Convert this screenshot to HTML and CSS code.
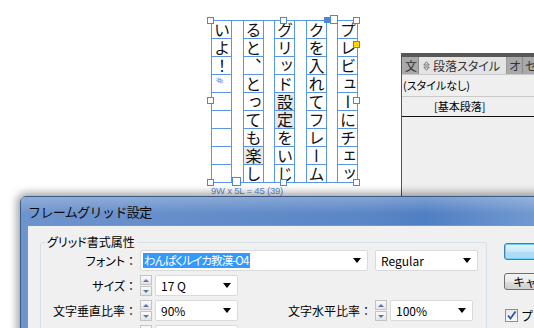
FILE: index.html
```html
<!DOCTYPE html>
<html lang="ja">
<head>
<meta charset="utf-8">
<title>フレームグリッド設定</title>
<link rel="stylesheet" href="styles.css">
</head>
<body>
<div class="frame-wrap">
  <div class="frame">
    <div class="col">
      <div class="cell"><span class="ch">い</span></div>
      <div class="cell"><span class="ch">よ</span></div>
      <div class="cell"><span class="ch">！</span></div>
      <div class="cell cell-mark"><span class="endmark">#</span></div>
      <div class="cell"></div>
      <div class="cell"></div>
      <div class="cell"></div>
      <div class="cell"></div>
      <div class="cell"></div>
    </div>
    <div class="col">
      <div class="cell"><span class="ch">る</span></div>
      <div class="cell"><span class="ch">と</span></div>
      <div class="cell"><span class="ch">、</span></div>
      <div class="cell"><span class="ch">と</span></div>
      <div class="cell"><span class="ch">っ</span></div>
      <div class="cell"><span class="ch">て</span></div>
      <div class="cell"><span class="ch">も</span></div>
      <div class="cell cell-sub"><span class="ch">楽</span></div>
      <div class="cell"><span class="ch">し</span></div>
    </div>
    <div class="col">
      <div class="cell"><span class="ch">グ</span></div>
      <div class="cell"><span class="ch">リ</span></div>
      <div class="cell"><span class="ch">ッ</span></div>
      <div class="cell"><span class="ch">ド</span></div>
      <div class="cell cell-sub"><span class="ch">設</span></div>
      <div class="cell cell-sub"><span class="ch">定</span></div>
      <div class="cell"><span class="ch">を</span></div>
      <div class="cell"><span class="ch">い</span></div>
      <div class="cell"><span class="ch">じ</span></div>
    </div>
    <div class="col">
      <div class="cell"><span class="ch">ク</span></div>
      <div class="cell"><span class="ch">を</span></div>
      <div class="cell"><span class="ch">入</span></div>
      <div class="cell"><span class="ch">れ</span></div>
      <div class="cell"><span class="ch">て</span></div>
      <div class="cell"><span class="ch">フ</span></div>
      <div class="cell"><span class="ch">レ</span></div>
      <div class="cell"><span class="ch">ー</span></div>
      <div class="cell"><span class="ch">ム</span></div>
    </div>
    <div class="col">
      <div class="cell"><span class="ch">プ</span></div>
      <div class="cell"><span class="ch">レ</span></div>
      <div class="cell"><span class="ch">ビ</span></div>
      <div class="cell"><span class="ch">ュ</span></div>
      <div class="cell"><span class="ch">ー</span></div>
      <div class="cell"><span class="ch">に</span></div>
      <div class="cell"><span class="ch">チ</span></div>
      <div class="cell"><span class="ch">ェ</span></div>
      <div class="cell"><span class="ch">ッ</span></div>
    </div>
    <span class="h h-tl"></span>
    <span class="h h-tm"></span>
    <span class="h h-tr"></span>
    <span class="h h-ml"></span>
    <span class="h h-mr"></span>
    <span class="h h-bl"></span>
    <span class="h h-bm"></span>
    <span class="h h-br"></span>
    <span class="inport"><span class="inport-fill"></span><span class="inport-box"></span></span>
    <span class="outport"></span>
    <span class="corner-opt"></span>
  </div>
  <div class="grid-count">9W x 5L = 45 (39)</div>
</div>

<div class="panel">
  <div class="panel-top"></div>
  <div class="tabs">
    <div class="tab tab-clip">文</div>
    <div class="tab tab-active">
      <svg class="tab-icon" width="7" height="10" viewBox="0 0 7 10"><path d="M3.5 0.8 L6.2 4 H0.8 Z M3.5 9.2 L6.2 6 H0.8 Z" fill="none" stroke="#666" stroke-width="0.9"/></svg>
      <span>段落スタイル</span>
    </div>
    <div class="tab">オ</div>
    <div class="tab">セ</div>
    <div class="tab tab-rest"></div>
  </div>
  <div class="panel-body">
    <div class="style-row style-none">(スタイルなし)</div>
    <div class="style-row style-basic">[基本段落]</div>
  </div>
</div>

<div class="dialog">
  <div class="titlebar">フレームグリッド設定</div>
  <div class="dlg-body">
    <fieldset class="group">
      <legend>グリッド書式属性</legend>
      <div class="frow">
        <span class="lbl">フォント<span class="colon">：</span></span>
        <div class="combo combo-font"><span class="selected">わんぱくルイカ教漢-O4</span><i class="arrow"></i></div>
        <div class="combo combo-style"><span>Regular</span><i class="arrow"></i></div>
      </div>
      <div class="frow">
        <span class="lbl">サイズ<span class="colon">：</span></span>
        <div class="spin"><span class="spin-up"></span><span class="spin-down"></span></div>
        <div class="combo combo-num"><span>17 Q</span><i class="arrow"></i></div>
      </div>
      <div class="frow">
        <span class="lbl">文字垂直比率<span class="colon">：</span></span>
        <div class="spin"><span class="spin-up"></span><span class="spin-down"></span></div>
        <div class="combo combo-num"><span>90%</span><i class="arrow"></i></div>
        <span class="lbl lbl-2">文字水平比率<span class="colon">：</span></span>
        <div class="spin"><span class="spin-up"></span><span class="spin-down"></span></div>
        <div class="combo combo-num"><span>100%</span><i class="arrow"></i></div>
      </div>
      <div class="frow">
        <span class="lbl"></span>
        <div class="spin"><span class="spin-up"></span><span class="spin-down"></span></div>
        <div class="combo combo-num"><i class="arrow"></i></div>
      </div>
    </fieldset>
    <div class="buttons">
      <div class="btn btn-ok">OK</div>
      <div class="btn btn-cancel">キャンセル</div>
      <div class="chk">
        <span class="chk-box"><svg width="11" height="11" viewBox="0 0 11 11"><path d="M2 5.5 L4.5 8.5 L9.5 1.5" fill="none" stroke="#2b55a6" stroke-width="1.8"/></svg></span>
        <span>プレビュー</span>
      </div>
    </div>
  </div>
</div>
</body>
</html>
```

FILE: styles.css
```css
html, body {
  margin: 0;
  padding: 0;
}
body {
  width: 534px;
  height: 328px;
  overflow: hidden;
  background: #fff;
  position: relative;
  font-family: "Noto Sans CJK JP", sans-serif;
  color: #000;
}

/* ---------- text frame on the canvas ---------- */
.frame-wrap {
  position: absolute;
  left: 211px;
  top: 20px;
  display: flex;
  flex-direction: column;
}
.frame {
  position: relative;
  width: 147px;
  height: 163px;
  box-sizing: border-box;
  border-top: 1px solid #5a95e6;
  border-bottom: 1px solid #5a95e6;
  display: flex;
  justify-content: space-between;
}
.col {
  width: 21px;
  box-sizing: border-box;
  border-left: 1px solid #5a95e6;
  border-right: 1px solid #5a95e6;
  display: flex;
  flex-direction: column;
}
.cell {
  height: 18px;
  box-sizing: border-box;
  border-bottom: 1px solid #5a95e6;
  display: flex;
  align-items: center;
  justify-content: center;
  flex: none;
}
.cell:last-child {
  border-bottom: none;
  height: 17px;
}
.cell-sub {
  background: #e8e8e8;
}
.ch {
  writing-mode: vertical-rl;
  font-size: 16px;
  line-height: 19px;
  width: 19px;
  height: 16px;
  text-align: center;
  color: #111;
}
.cell-mark {
  align-items: flex-start;
  justify-content: flex-start;
}
.endmark {
  display: block;
  font-family: "DejaVu Sans", sans-serif;
  font-size: 9px;
  line-height: 9px;
  color: #6a9fe8;
  transform: rotate(90deg);
  margin: 1px 0 0 3px;
}
.h {
  position: absolute;
  width: 5px;
  height: 5px;
  border: 1px solid #4a88de;
  background: #fff;
}
.h-tl { left: -4px; top: -4px; }
.h-tm { left: 69px; top: -4px; }
.h-tr { left: 142px; top: -4px; }
.h-ml { left: -4px; top: 76px; }
.h-mr { left: 142px; top: 76px; }
.h-bl { left: -4px; top: 158px; }
.h-bm { left: 69px; top: 158px; }
.h-br { left: 142px; top: 158px; }
.inport {
  position: absolute;
  left: 113px;
  top: -6px;
  display: flex;
  align-items: center;
}
.inport-fill {
  width: 6px;
  height: 6px;
  background: #4a88de;
}
.inport-box {
  width: 6px;
  height: 7px;
  border: 1px solid #4a88de;
  background: #fff;
}
.outport {
  position: absolute;
  left: 21px;
  top: 156px;
  width: 7px;
  height: 7px;
  border: 1px solid #4a88de;
  background: #fff;
}
.corner-opt {
  position: absolute;
  left: 142px;
  top: 20px;
  width: 5px;
  height: 5px;
  border: 1px solid #4a88de;
  background: #ffd500;
}
.grid-count {
  margin-top: 3px;
  font-family: "Liberation Sans", sans-serif;
  font-size: 9.5px;
  line-height: 10px;
  letter-spacing: -0.2px;
  color: #5b8ed6;
  white-space: nowrap;
}

/* ---------- paragraph styles panel ---------- */
.panel {
  position: absolute;
  left: 401px;
  top: 53px;
  width: 133px;
  height: 150px;
  background: #efefef;
  border-left: 1px solid #555;
  display: flex;
  flex-direction: column;
  overflow: hidden;
}
.panel-top {
  height: 4px;
  background: #575757;
}
.tabs {
  height: 17px;
  display: flex;
  background: #a9a9a9;
  border-bottom: 1px solid #c8c8c8;
}
.tab {
  font-size: 12px;
  line-height: 17px;
  color: #333;
  padding: 0 2px;
  border-right: 1px solid #8a8a8a;
  width: 11px;
  overflow: hidden;
  white-space: nowrap;
  flex: none;
}
.tab-clip {
  width: 11px;
  padding-left: 3px;
}
.tab-active {
  width: auto;
  background: #e4e4e4;
  padding: 0 6px 0 4px;
  display: flex;
  align-items: center;
  gap: 3px;
  font-feature-settings: "palt";
  border-right: 1px solid #9a9a9a;
}
.tab-rest {
  flex: 1;
  border-right: none;
}
.panel-body {
  display: flex;
  flex-direction: column;
}
.style-row {
  font-size: 11px;
  font-feature-settings: "palt";
  white-space: nowrap;
}
.style-none {
  height: 21px;
  line-height: 21px;
  padding-left: 1px;
  border-bottom: 1px solid #c9c9c9;
}
.style-basic {
  height: 19px;
  line-height: 18px;
  padding-left: 32px;
  border-bottom: 1px solid #111;
}

/* ---------- dialog ---------- */
.dialog {
  position: absolute;
  left: 20px;
  top: 196px;
  width: 580px;
  height: 160px;
  box-sizing: border-box;
  border: 1px solid #3b5b86;
  border-radius: 6px 6px 0 0;
  background: linear-gradient(to right, #6e94cd 0%, #5a86c6 60%, #4f7fc3 70%, #86a9d9 100%);
  box-shadow: 0 0 9px 3px rgba(0, 0, 0, 0.38);
  display: flex;
  flex-direction: column;
}
.titlebar {
  height: 28px;
  flex: none;
  padding-left: 7px;
  display: flex;
  align-items: center;
  font-size: 13px;
  letter-spacing: -0.6px;
  color: #0a0a0a;
  background: linear-gradient(to bottom, rgba(255,255,255,0.25), rgba(255,255,255,0) 60%);
}
.dlg-body {
  flex: 1;
  margin-left: 6px;
  background: #f0f0f0;
  border-left: 1px solid #8193ad;
  border-top: 1px solid #8193ad;
  display: flex;
  padding: 8px 0 0 12px;
  align-items: flex-start;
}
.group {
  margin: 0;
  width: 447px;
  box-sizing: border-box;
  border: 1px solid #d5dfe5;
  border-radius: 3px;
  padding: 0;
  display: flex;
  flex-direction: column;
  gap: 4px;
}
.group legend {
  font-size: 12px;
  line-height: 16px;
  padding: 0 2px;
  margin-left: 4px;
  font-feature-settings: "palt";
}
.frow {
  display: flex;
  align-items: center;
  height: 21px;
}
.lbl {
  width: 96px;
  flex: none;
  text-align: right;
  font-size: 12px;
  font-feature-settings: "palt";
  margin-right: 3px;
  white-space: nowrap;
}
.colon {
  font-feature-settings: normal;
}
.lbl-2 {
  width: 134px;
  margin-right: 3px;
}
.combo {
  height: 21px;
  box-sizing: border-box;
  background: #fff;
  border: 1px solid #dadada;
  border-radius: 2px;
  display: flex;
  align-items: center;
  justify-content: space-between;
  padding: 0 6px 0 5px;
  font-size: 12px;
  flex: none;
}
.combo-font {
  width: 228px;
  padding-left: 2px;
}
.combo-style {
  width: 103px;
  margin-left: 7px;
}
.combo-num {
  width: 83px;
  margin-left: 3px;
}
.combo-num .arrow:first-child {
  margin-left: auto;
}
.selected {
  background: #3399ff;
  color: #fff;
  font-size: 11.5px;
  letter-spacing: -0.9px;
  line-height: 15px;
  padding: 0 2px 0 1px;
  font-feature-settings: "palt";
}
.arrow {
  width: 0;
  height: 0;
  border-left: 4px solid transparent;
  border-right: 4px solid transparent;
  border-top: 5px solid #000;
}
.spin {
  width: 12px;
  height: 21px;
  box-sizing: border-box;
  display: flex;
  flex-direction: column;
  gap: 1px;
  flex: none;
}
.spin-up, .spin-down {
  flex: 1;
  box-sizing: border-box;
  border: 1px solid #c3c3c3;
  background: linear-gradient(#fbfbfb, #e4e4e4);
  display: flex;
  align-items: center;
  justify-content: center;
}
.spin-up::after {
  content: "";
  border-left: 3px solid transparent;
  border-right: 3px solid transparent;
  border-bottom: 3px solid #5a76a8;
}
.spin-down::after {
  content: "";
  border-left: 3px solid transparent;
  border-right: 3px solid transparent;
  border-top: 3px solid #5a76a8;
}

.buttons {
  margin-left: 17px;
  padding-top: 9px;
  display: flex;
  flex-direction: column;
  width: 80px;
}
.btn {
  height: 17px;
  box-sizing: border-box;
  border-radius: 3px;
  font-size: 12px;
  line-height: 15px;
  text-align: center;
  white-space: nowrap;
}
.btn-ok {
  border: 1px solid #3c7fb1;
  background: linear-gradient(#e6f5fd, #c7e7f8 50%, #b2ddf5 51%, #a9d9f4);
  box-shadow: inset 0 0 0 1px #6fd0f7;
  color: transparent;
}
.btn-cancel {
  margin-top: 13px;
  border: 1px solid #707070;
  background: linear-gradient(#f2f2f2, #ebebeb 50%, #dddddd 51%, #cfcfcf);
  text-align: left;
  padding-left: 8px;
}
.chk {
  margin-top: 17px;
  display: flex;
  align-items: center;
  gap: 3px;
  font-size: 12px;
  padding-left: 1px;
  white-space: nowrap;
}
.chk-box {
  width: 13px;
  height: 13px;
  box-sizing: border-box;
  border: 1px solid #8f8f8f;
  background: linear-gradient(#e9e9e9, #fafafa);
  display: flex;
  align-items: center;
  justify-content: center;
}
```
